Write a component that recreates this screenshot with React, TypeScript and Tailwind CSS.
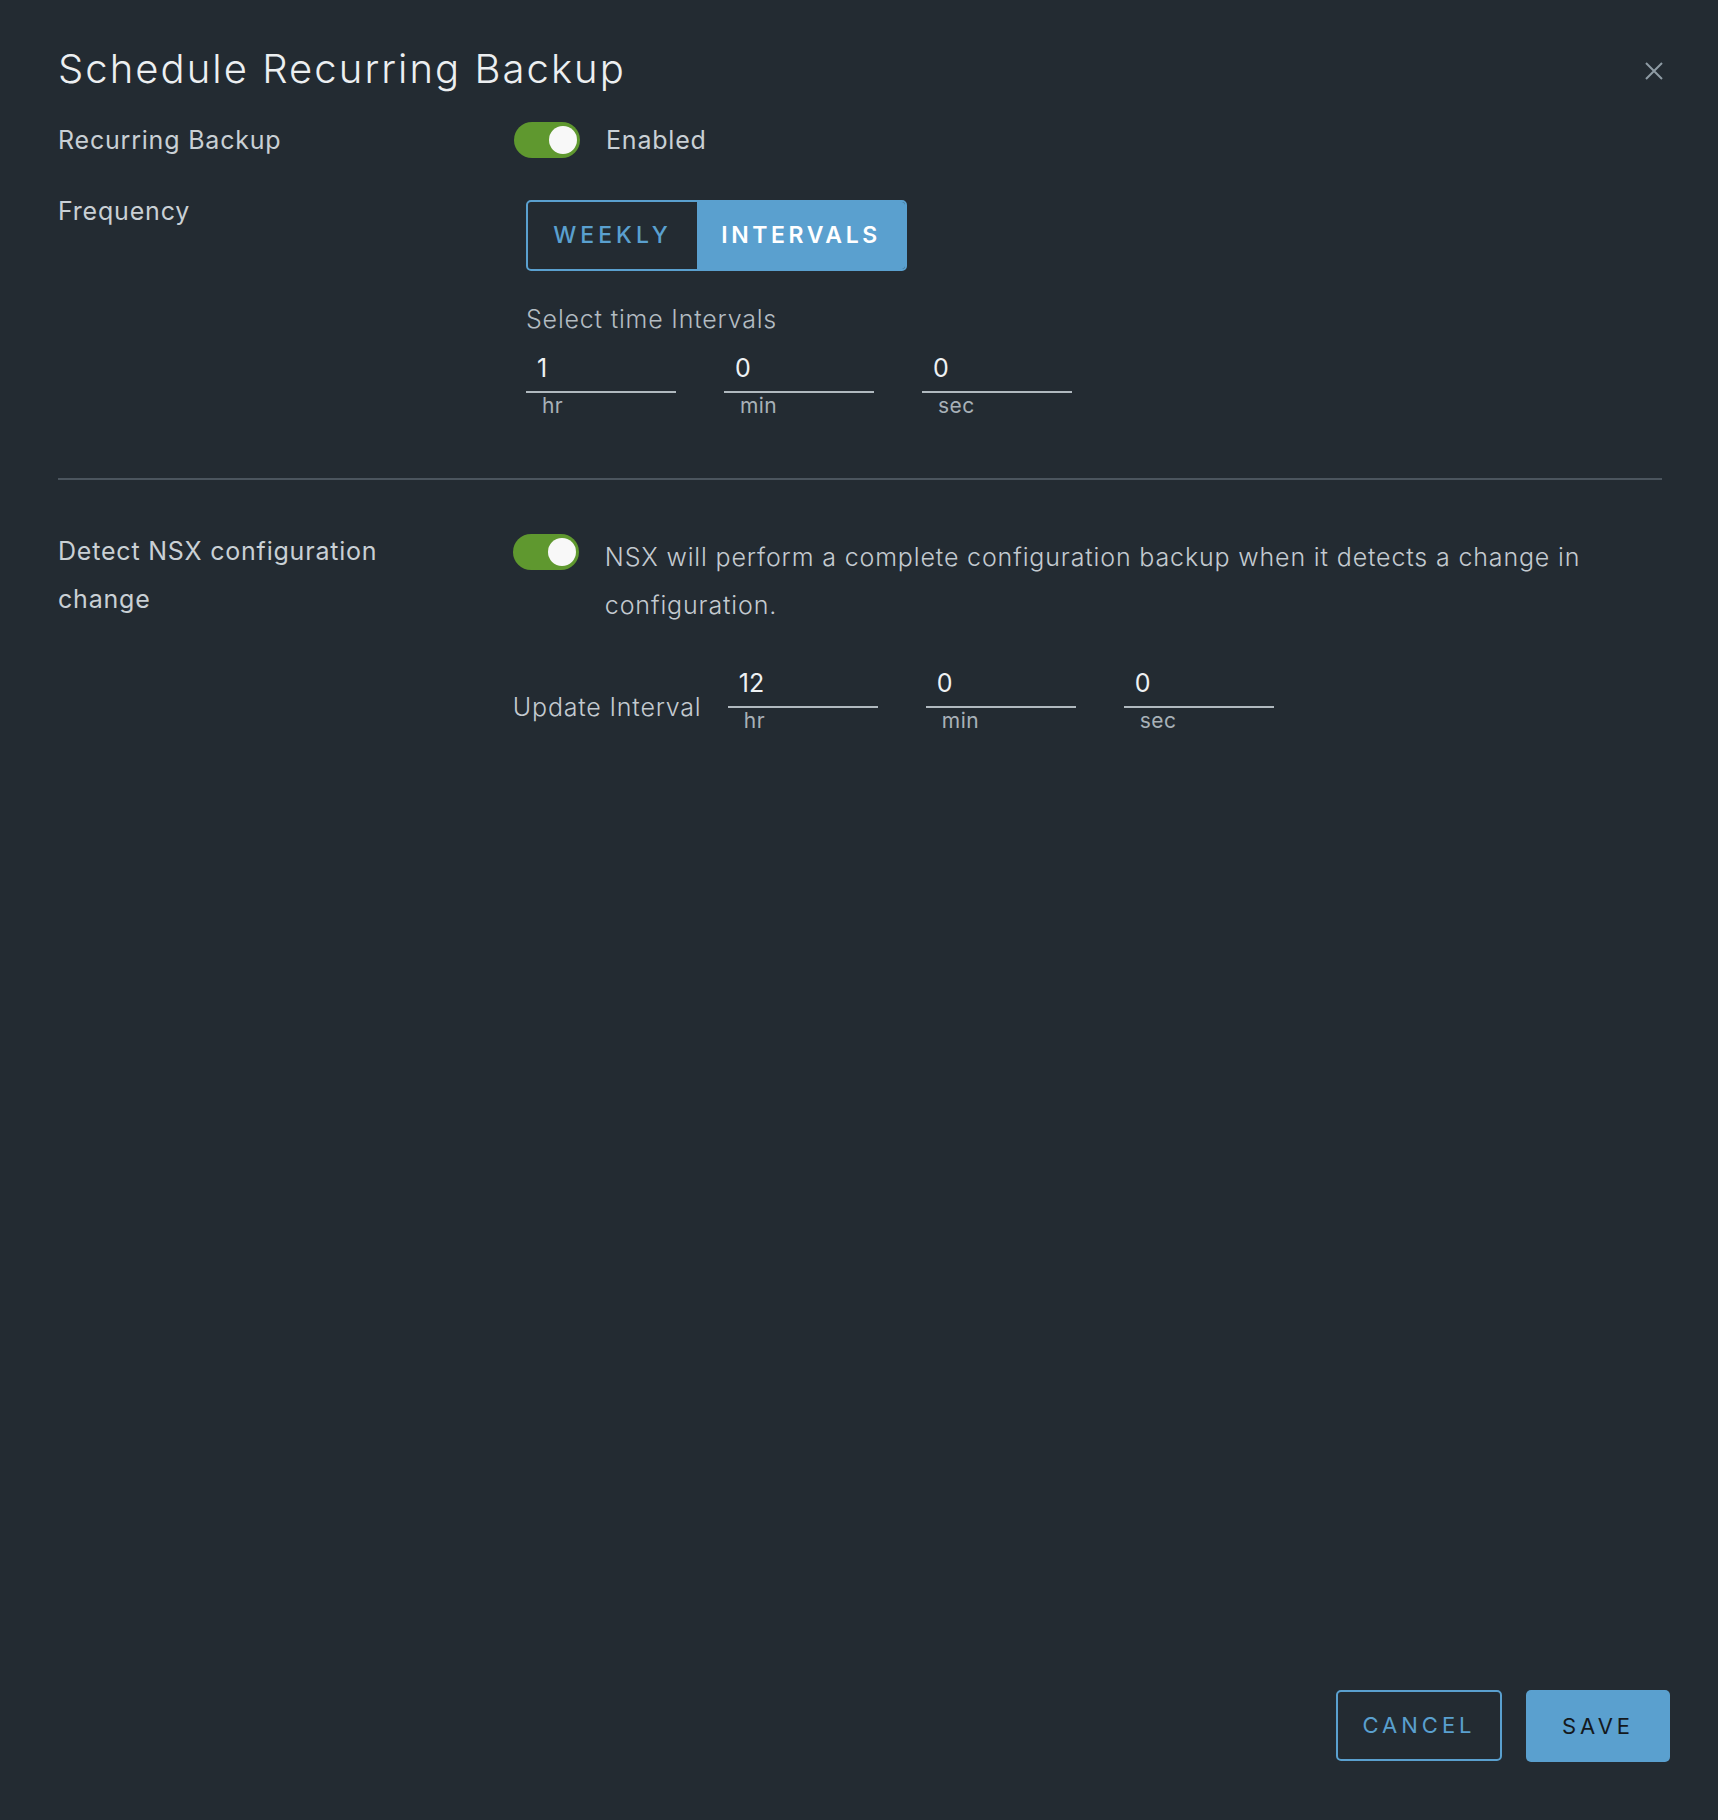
const Toggle = () => (
  <div className="relative h-[36px] w-[66px] shrink-0 rounded-full bg-[#5f982f]">
    <div className="absolute right-[3px] top-[4px] h-[28px] w-[28px] rounded-full bg-[#f8f8f8]" />
  </div>
);

const TimeField = ({ value, unit }: { value: string; unit: string }) => (
  <div className="flex w-[150px] flex-col">
    <div className="h-[42px] border-b-2 border-[#b0b9bf] pl-[11px] text-[25px] leading-[34px] text-[#eef1f3]">
      {value}
    </div>
    <div className="pl-[16px] text-[21px] leading-[26px] tracking-[0.4px] text-[#a8b1b8]">
      {unit}
    </div>
  </div>
);

const App = () => {
  return (
    <div className="flex h-[1820px] w-full flex-col bg-[#232b32] font-['Inter',sans-serif] text-[#c9d0d5]">
      <div className="pl-[58px] pr-[56px] pt-[41px]">
        <div className="flex items-start justify-between">
          <h1 className="text-[40px] font-light leading-[56px] tracking-[2.05px] text-[#eceff1]">
            Schedule Recurring Backup
          </h1>
          <button className="mr-[-1px] mt-[21px] text-[#8e9ba4]">
            <svg width="18" height="18" viewBox="0 0 18 18" fill="none" stroke="currentColor" strokeWidth="2">
              <path d="M1 1L17 17M17 1L1 17" />
            </svg>
          </button>
        </div>

        <div className="mt-[25px] flex items-center">
          <div className="w-[456px] text-[25px] leading-[36px] tracking-[0.8px]">Recurring Backup</div>
          <Toggle />
          <span className="ml-[26px] text-[25px] leading-[36px] tracking-[0.8px]">Enabled</span>
        </div>

        <div className="mt-[42px] flex">
          <div className="w-[468px] pt-[1px] text-[25px] leading-[20px] tracking-[0.8px]">Frequency</div>
          <div className="flex flex-col">
            <div className="flex h-[71px] w-[381px] overflow-hidden rounded-[5px] border-2 border-[#5aa0cf]">
              <button className="w-[169px] text-[23px] font-medium tracking-[4px] text-[#5aa0cf]">
                WEEKLY
              </button>
              <button className="flex-1 bg-[#5aa0cf] text-[23px] font-semibold tracking-[3.6px] text-white">
                INTERVALS
              </button>
            </div>
            <div className="mt-[33px] text-[25px] font-light leading-[30px] tracking-[0.8px] text-[#b3bcc2]">
              Select time Intervals
            </div>
            <div className="mt-[17px] flex gap-[48px]">
              <TimeField value="1" unit="hr" />
              <TimeField value="0" unit="min" />
              <TimeField value="0" unit="sec" />
            </div>
          </div>
        </div>

        <div className="mt-[59px] h-[2px] bg-[#4b555e]" />

        <div className="mt-[47px] flex">
          <div className="w-[456px] text-[25px] leading-[48px] tracking-[0.8px]">
            Detect NSX configuration
            <br />
            change
          </div>
          <div className="flex flex-col">
            <div className="flex items-start pt-[6px]">
              <div className="pt-[1px]">
                <Toggle />
              </div>
              <p className="ml-[26px] max-w-[1060px] text-[25px] font-light leading-[48px] tracking-[0.85px] text-[#c3cad0]">
                NSX will perform a complete configuration backup when it detects a change in
                configuration.
              </p>
            </div>
            <div className="mt-[37px] flex items-start">
              <span className="mt-[23px] w-[215px] text-[25px] font-light leading-[36px] tracking-[0.8px] text-[#c3cad0]">
                Update Interval
              </span>
              <div className="flex gap-[48px]">
                <TimeField value="12" unit="hr" />
                <TimeField value="0" unit="min" />
                <TimeField value="0" unit="sec" />
              </div>
            </div>
          </div>
        </div>
      </div>

      <div className="mt-auto flex justify-end gap-[24px] pb-[58px] pr-[48px]">
        <button className="h-[71px] w-[166px] rounded-[5px] border-2 border-[#5aa0cf] text-[22px] tracking-[4px] text-[#5aa0cf]">
          CANCEL
        </button>
        <button className="h-[72px] w-[144px] rounded-[5px] bg-[#5aa0cf] text-[22px] tracking-[4px] text-[#14191d]">
          SAVE
        </button>
      </div>
    </div>
  );
};

export default App;
